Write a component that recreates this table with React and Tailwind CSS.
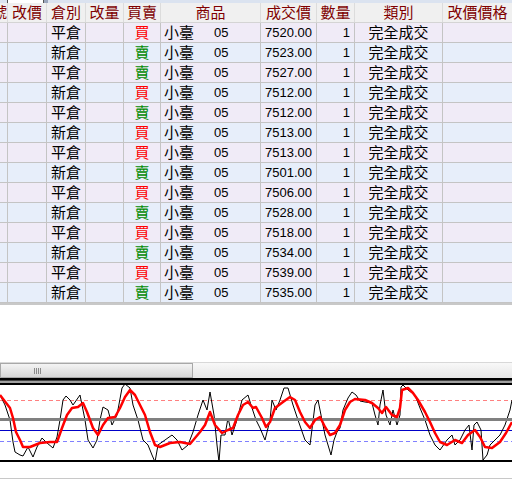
import React from 'react';

const rows = [
  ['平倉', '買', '7520.00'],
  ['新倉', '賣', '7523.00'],
  ['平倉', '賣', '7527.00'],
  ['新倉', '買', '7512.00'],
  ['平倉', '賣', '7512.00'],
  ['新倉', '買', '7513.00'],
  ['平倉', '買', '7513.00'],
  ['新倉', '賣', '7501.00'],
  ['平倉', '買', '7506.00'],
  ['新倉', '賣', '7528.00'],
  ['平倉', '買', '7518.00'],
  ['新倉', '賣', '7534.00'],
  ['平倉', '買', '7539.00'],
  ['新倉', '賣', '7535.00'],
];

// 指標線 (手描きの近似値)
const redLine = [
  [0, 395], [10, 408], [13, 418], [16, 432], [20, 440], [23, 447], [30, 447], [40, 443], [50, 442], [57, 442],
  [62, 428], [67, 415], [72, 408], [78, 407], [83, 403], [87, 412], [93, 428], [98, 435], [103, 425], [108, 418],
  [115, 417], [120, 408], [125, 397], [130, 390], [135, 395], [140, 405], [145, 415], [150, 432], [155, 445],
  [160, 447], [170, 443], [180, 442], [190, 444], [195, 438], [200, 432], [205, 425], [210, 412], [215, 425],
  [222, 433], [228, 430], [233, 428], [238, 415], [243, 405], [248, 402], [253, 408], [256, 407], [262, 418],
  [266, 427], [270, 422], [275, 408], [283, 402], [290, 397], [295, 400], [300, 412], [305, 422], [310, 428],
  [315, 420], [320, 417], [325, 427], [330, 435], [335, 433], [340, 425], [345, 410], [350, 402], [355, 399],
  [365, 400], [372, 403], [378, 408], [382, 413], [386, 407], [392, 415], [397, 417], [400, 408], [402, 390],
  [408, 388], [413, 393], [418, 400], [425, 412], [430, 422], [435, 433], [440, 442], [447, 445], [455, 440],
  [462, 443], [468, 435], [475, 430], [480, 437], [485, 447], [492, 448], [500, 442], [506, 433], [512, 422],
];

const blackLine = [
  [0, 395], [5, 405], [10, 420], [13, 442], [15, 452], [20, 455], [23, 456], [28, 447], [33, 457], [37, 447],
  [42, 438], [47, 443], [53, 448], [57, 437], [60, 420], [63, 400], [66, 396], [70, 400], [73, 405], [80, 395],
  [85, 420], [88, 440], [93, 448], [97, 440], [100, 420], [103, 407], [108, 410], [112, 425], [117, 415],
  [122, 388], [125, 384], [130, 388], [133, 405], [138, 420], [143, 440], [148, 445], [152, 455], [155, 462],
  [158, 445], [165, 440], [172, 435], [177, 440], [182, 450], [188, 445], [193, 432], [198, 415], [203, 400],
  [207, 410], [210, 392], [214, 415], [217, 445], [219, 462], [221, 435], [225, 435], [228, 418], [232, 435],
  [237, 420], [242, 400], [248, 395], [251, 405], [256, 420], [260, 428], [265, 440], [270, 420], [272, 400],
  [276, 410], [280, 400], [284, 388], [288, 388], [293, 405], [298, 420], [305, 440], [310, 445], [315, 405],
  [318, 400], [322, 420], [325, 435], [328, 445], [331, 455], [334, 440], [337, 432], [340, 428], [343, 410],
  [348, 398], [352, 392], [356, 395], [360, 401], [365, 402], [372, 403], [375, 415], [378, 425], [380, 405],
  [383, 390], [386, 415], [390, 425], [393, 410], [397, 425], [400, 415], [401, 387], [403, 385], [408, 390],
  [415, 395], [420, 408], [425, 420], [430, 435], [435, 445], [440, 450], [447, 440], [452, 435], [455, 445],
  [460, 440], [465, 430], [469, 425], [472, 450], [474, 425], [477, 422], [481, 430], [483, 460], [487, 455],
  [490, 445], [495, 440], [500, 435], [505, 425], [510, 410], [512, 400],
];

const pts = (list) => list.map(([x, y]) => `${x},${y}`).join(' ');

function HeadCell({ children, className = '' }) {
  return (
    <div className={`flex h-full items-center justify-center overflow-hidden border-r border-[#dcdcdc] whitespace-nowrap ${className}`}>
      {children}
    </div>
  );
}

function Cell({ children, className = '' }) {
  return (
    <div className={`flex h-full items-center overflow-hidden border-r border-[#c4c4c4] whitespace-nowrap ${className}`}>
      {children}
    </div>
  );
}

const cols = 'grid grid-cols-[8px_39px_39px_38px_37px_100px_56px_38px_88px_69px]';

export default function App() {
  return (
    <div
      className="w-[512px] h-[482px] overflow-hidden bg-white text-[15px] leading-none text-black"
      style={{ fontFamily: '"Liberation Sans", "Noto Sans CJK TC", sans-serif' }}
    >
      {/* 上のタブ部分 */}
      <div className="flex h-[3px] bg-[#dbe3f0]">
        <div className="w-[7px]" />
        <div className="w-[37px] border-x border-[#555] bg-white" />
        <div className="w-[4px] bg-[#9aa6bc]" />
      </div>

      <div className={`${cols} h-[20px] border-b border-[#d4d4d4] bg-[#f0f0f0] text-[#800000]`}>
        <HeadCell className="justify-end">號</HeadCell>
        <HeadCell>改價</HeadCell>
        <HeadCell>倉別</HeadCell>
        <HeadCell>改量</HeadCell>
        <HeadCell>買賣</HeadCell>
        <HeadCell>商品</HeadCell>
        <HeadCell>成交價</HeadCell>
        <HeadCell>數量</HeadCell>
        <HeadCell>類別</HeadCell>
        <HeadCell className="border-r-0">改價價格</HeadCell>
      </div>

      {rows.map(([kind, side, price], i) => (
        <div
          key={i}
          className={`${cols} h-[20px] border-b border-[#c4c4c4] ${i % 2 === 0 ? 'bg-[#f0ebf7]' : 'bg-[#e7eefa]'}`}
        >
          <Cell />
          <Cell />
          <Cell className="justify-center">{kind}</Cell>
          <Cell />
          <Cell className={`justify-center ${side === '買' ? 'text-[#ff0000]' : 'text-[#008a00]'}`}>{side}</Cell>
          <Cell className="pl-[3px]">
            <span className="w-[50px]">小臺</span>
            <span className="text-[13px]">05</span>
          </Cell>
          <Cell className="justify-center text-[13px]">{price}</Cell>
          <Cell className="justify-end pr-[4px] text-[13px]">1</Cell>
          <Cell className="justify-center">完全成交</Cell>
          <Cell className="border-r-0" />
        </div>
      ))}
      <div className="h-[2px] bg-[#c8c8c8]" />

      <div className="h-[57px]" />

      {/* 横スクロールバー */}
      <div className="flex h-[16px] border-t border-[#d8d8d8] bg-linear-to-b from-[#f8f8f8] to-[#e6e6e6]">
        <div className="flex w-[193px] items-center gap-[1px] border border-[#a8a8a8] bg-linear-to-b from-[#f4f4f4] to-[#d6d6d6] pl-[33px]">
          <div className="h-[6px] w-px bg-[#8a8a8a]" />
          <div className="h-[6px] w-px bg-[#8a8a8a]" />
          <div className="h-[6px] w-px bg-[#8a8a8a]" />
          <div className="h-[6px] w-px bg-[#8a8a8a]" />
        </div>
        <div className="flex-1" />
      </div>

      <div className="h-[2px] bg-black" />
      <div className="h-px bg-[#444]" />
      <div className="h-[2px] bg-[#a0a0a0]" />
      <div className="h-[2px] bg-black" />

      <svg width="512" height="93" viewBox="0 385 512 93" className="block">
        <line x1="0" x2="512" y1="400.5" y2="400.5" stroke="#ff8080" strokeDasharray="4 3" />
        <line x1="0" x2="512" y1="430.5" y2="430.5" stroke="#0000c8" />
        <line x1="0" x2="512" y1="441.5" y2="441.5" stroke="#8080ff" strokeDasharray="4 3" />
        <line x1="0" x2="512" y1="461" y2="461" stroke="#000" strokeWidth="2" />
        <polyline points={pts(blackLine)} fill="none" stroke="#000" strokeWidth="1" />
        <line x1="0" x2="512" y1="419.5" y2="419.5" stroke="#808080" strokeWidth="3" />
        <polyline points={pts(redLine)} fill="none" stroke="#ff0000" strokeWidth="2.5" strokeLinejoin="round" />
      </svg>
      <div className="h-px bg-[#c8c8c8]" />
    </div>
  );
}
